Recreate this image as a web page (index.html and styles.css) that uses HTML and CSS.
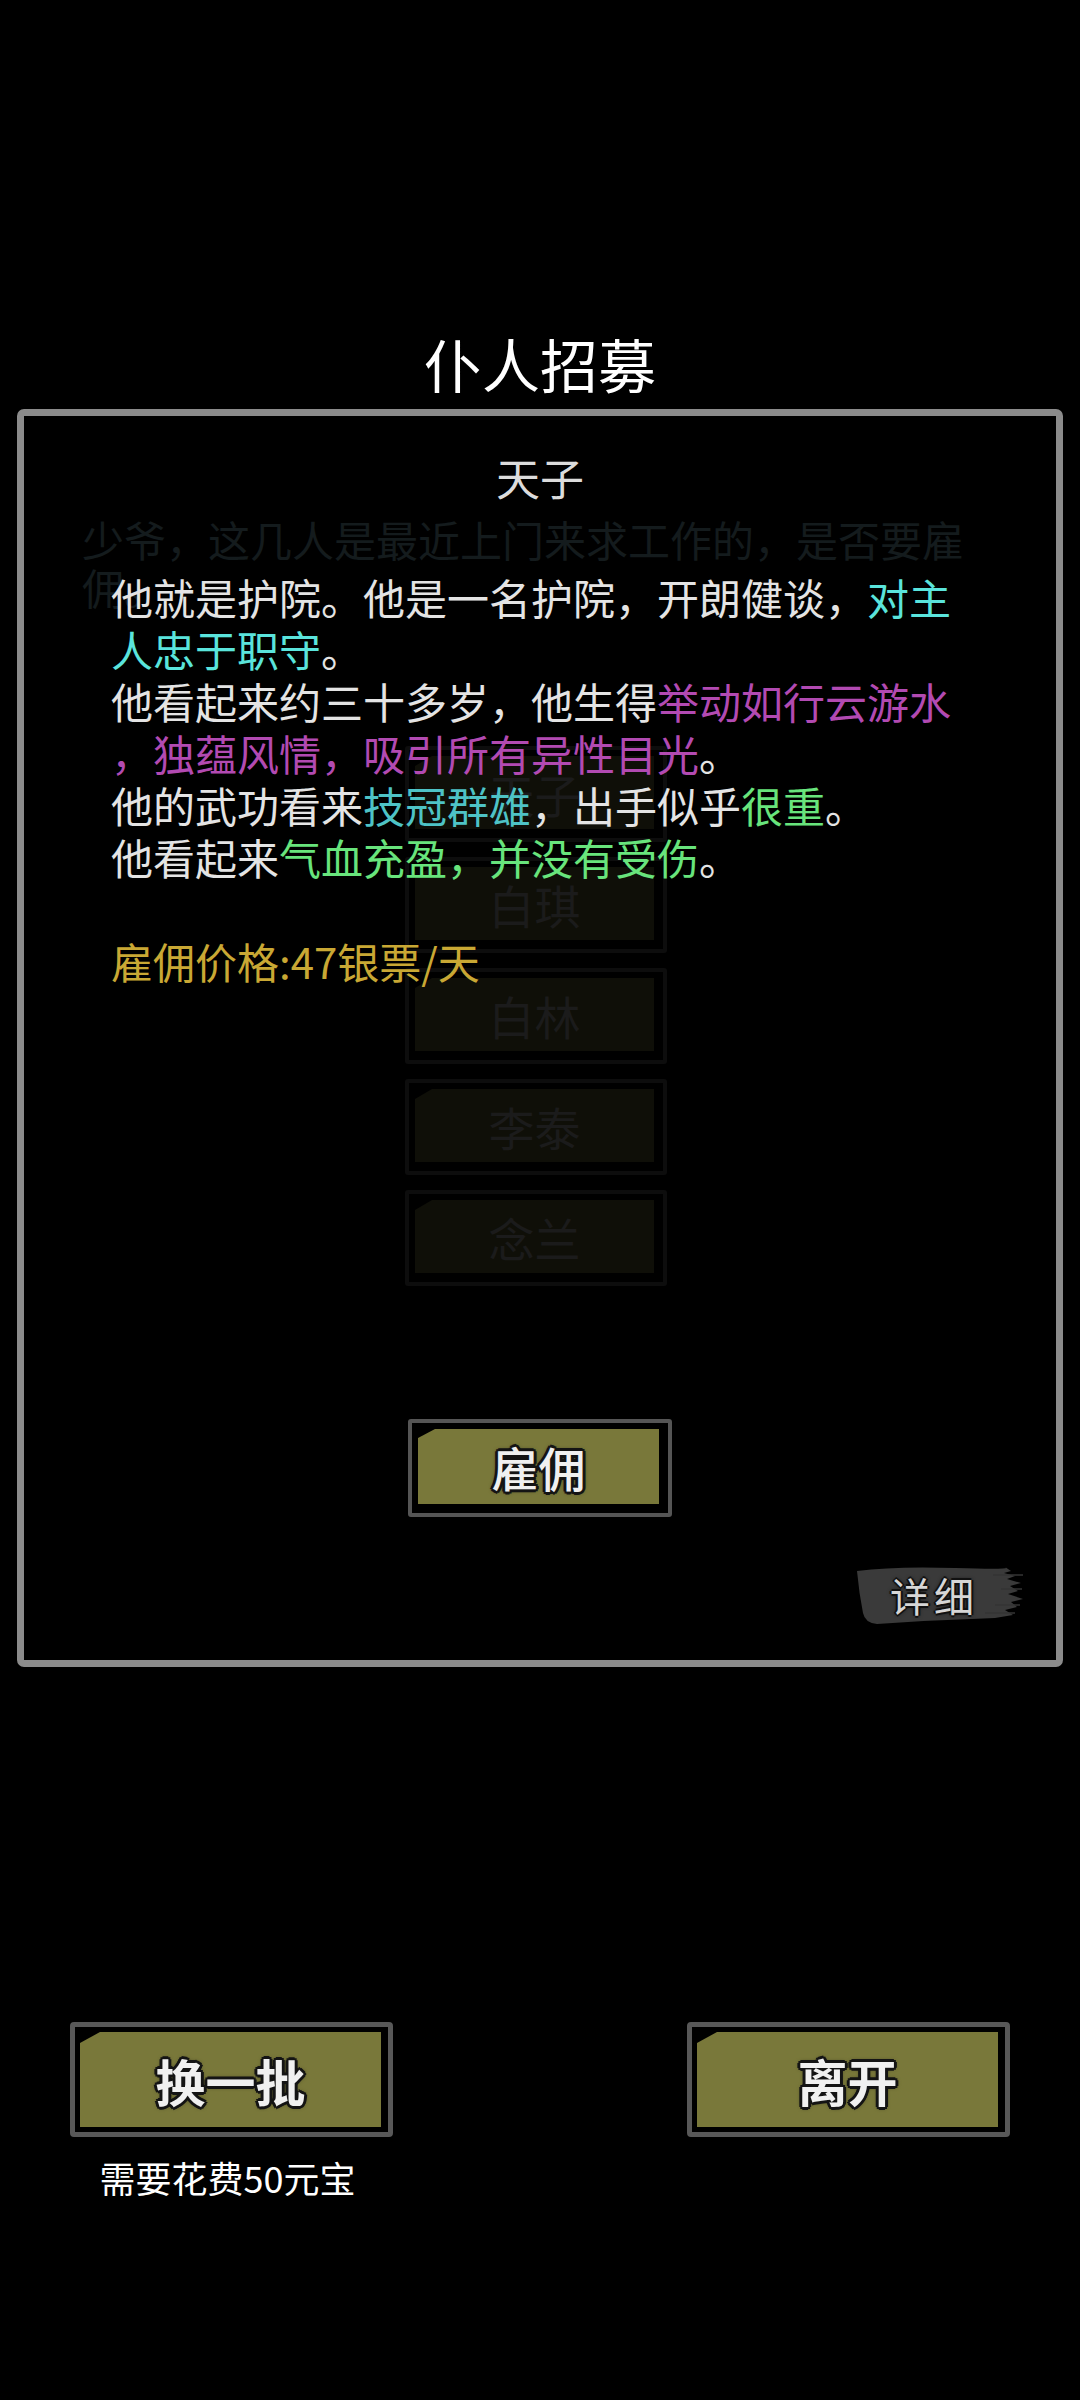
FILE: index.html
```html
<!DOCTYPE html>
<html lang="zh">

<head>
    <meta charset="UTF-8">
    <meta name="viewport" content="width=device-width, initial-scale=1.0">
    <title>仆人招募</title>
    <link rel="stylesheet" href="styles.css">
</head>

<body>
    <h1 class="title">仆人招募</h1>

    <div class="panel">
        <!-- dimmed dialog behind the popup -->
        <div class="backdrop">
            <p class="backdrop-text">少爷，这几人是最近上门来求工作的，是否要雇佣。</p>
            <ul class="backdrop-list">
                <li class="ghost-btn"><span>天子</span></li>
                <li class="ghost-btn"><span>白琪</span></li>
                <li class="ghost-btn"><span>白林</span></li>
                <li class="ghost-btn"><span>李泰</span></li>
                <li class="ghost-btn"><span>念兰</span></li>
            </ul>
        </div>

        <div class="panel-body">
            <div class="servant-name">天子</div>

            <div class="servant-desc">
                他就是护院。他是一名护院，开朗健谈，<span class="c-cyan">对主<br>人忠于职守</span>。<br>
                他看起来约三十多岁，他生得<span class="c-purple">举动如行云游水<br>，独蕴风情，吸引所有异性目光</span>。<br>
                他的武功看来<span class="c-teal">技冠群雄</span>，出手似乎<span class="c-green">很重</span>。<br>
                他看起来<span class="c-green">气血充盈，并没有受伤</span>。<br>
                <br>
                <span class="c-gold">雇佣价格:47银票/天</span>
            </div>

            <div class="btn btn-hire"><span class="btn-fill">雇佣</span></div>

            <div class="detail-row">
                <div class="detail-brush">
                    <svg class="brush" viewBox="0 0 168 64" width="168" height="64">
                        <path d="M2 8 Q40 3 100 5 T150 4 L156 8 L149 10 L160 13 L152 16 L166 20 L155 23 L163 28 L153 31 L168 36 L156 39 L162 44 L150 47 L158 52 L140 55 Q80 57 22 61 Q10 60 8 50 Q4 30 2 8 Z" fill="#3a3a3a" />
                        <path d="M138 12 H170 M146 26 H167 M140 42 H165 M130 50 H160" stroke="#343434" stroke-width="1.5" />
                    </svg>
                    <span class="detail-text">详细</span>
                </div>
            </div>
        </div>
    </div>

    <div class="actions">
        <div class="action">
            <div class="btn btn-big"><span class="btn-fill">换一批</span></div>
            <div class="cost">需要花费50元宝</div>
        </div>
        <div class="action">
            <div class="btn btn-big"><span class="btn-fill">离开</span></div>
        </div>
    </div>
</body>

</html>
```

FILE: styles.css
```css
* {
    margin: 0;
    padding: 0;
    box-sizing: border-box;
}

body {
    width: 1080px;
    min-height: 2400px;
    background-color: #000;
    color: #e4e4e4;
    font-family: "Noto Sans CJK SC", "Noto Sans", sans-serif;
    overflow: hidden;
}

.title {
    padding-top: 328px;
    font-size: 58px;
    line-height: 70px;
    font-weight: 400;
    text-align: center;
    color: #fff;
}

/* Popup panel */
.panel {
    position: relative;
    height: 1258px;
    margin: 11px 17px 0;
    border: 7px solid #8b8b8b;
    border-radius: 7px;
    background-color: #000;
}

.backdrop {
    position: absolute;
    inset: 0;
    padding-top: 99px;
}

.backdrop-text {
    width: 900px;
    margin-left: 58px;
    font-size: 42px;
    line-height: 48px;
    color: #141b1d;
}

.backdrop-list {
    list-style: none;
    margin-top: 135px;
    padding-left: 381px;
    display: flex;
    flex-direction: column;
    gap: 15px;
}

.ghost-btn {
    width: 262px;
    height: 96px;
    padding: 6px 9px 9px 6px;
    border: 4px solid #0d0d0d;
    border-radius: 3px;
}

.ghost-btn span {
    display: flex;
    align-items: center;
    justify-content: center;
    height: 100%;
    background-color: #0f0f08;
    clip-path: polygon(0 10px, 17px 0, 100% 0, 100% 100%, 0 100%);
    font-size: 46px;
    color: #1b1b1b;
}

.panel-body {
    position: relative;
    padding-top: 35px;
}

.servant-name {
    font-size: 44px;
    line-height: 52px;
    text-align: center;
    color: #dcdcdc;
}

.servant-desc {
    margin-top: 68px;
    padding-left: 87px;
    font-size: 42px;
    line-height: 52px;
    white-space: nowrap;
    color: #e4e4e4;
}

.c-cyan {
    color: #5ae4dc;
}

.c-purple {
    color: #b24ab2;
}

.c-teal {
    color: #4ec3c6;
}

.c-green {
    color: #68e47c;
}

.c-gold {
    color: #c9a834;
}

/* Olive game buttons */
.btn {
    border: 4px solid #555;
    border-radius: 3px;
    background-color: #000;
}

.btn-fill {
    display: flex;
    align-items: center;
    justify-content: center;
    height: 100%;
    background-color: #79783a;
    color: #f0f0f0;
    text-shadow: 3px 0 #141414, -3px 0 #141414, 0 3px #141414, 0 -3px #141414,
        2px 2px #141414, -2px -2px #141414, 2px -2px #141414, -2px 2px #141414, 0 0 5px #000;
}

.btn-hire {
    width: 264px;
    height: 98px;
    margin: 432px auto 0;
    padding: 6px 9px 9px 6px;
}

.btn-hire .btn-fill {
    clip-path: polygon(0 9px, 17px 0, 100% 0, 100% 100%, 0 100%);
    font-size: 47px;
    font-weight: 500;
}

.detail-row {
    display: flex;
    justify-content: flex-end;
    margin-top: 46px;
    padding-right: 33px;
}

.detail-brush {
    position: relative;
    width: 168px;
    height: 64px;
    display: flex;
    align-items: center;
    justify-content: center;
}

.brush {
    position: absolute;
    left: 0;
    top: 0;
}

.detail-text {
    position: relative;
    margin-right: 10px;
    font-size: 40px;
    letter-spacing: 4px;
    color: #d6d6d6;
    text-shadow: 2px 0 #111, -2px 0 #111, 0 2px #111, 0 -2px #111, 0 0 4px #000;
}

/* Bottom actions */
.actions {
    display: flex;
    justify-content: space-between;
    margin-top: 355px;
    padding: 0 70px;
}

.action {
    display: flex;
    flex-direction: column;
    align-items: center;
}

.btn-big {
    width: 323px;
    height: 115px;
    padding: 5px 7px 5px 5px;
    border-width: 5px;
    border-color: #585858;
    border-radius: 4px;
}

.btn-big .btn-fill {
    clip-path: polygon(0 11px, 20px 0, 100% 0, 100% 100%, 0 100%);
    font-size: 50px;
    font-weight: 700;
}

.cost {
    margin-top: 19px;
    margin-right: 8px;
    font-size: 36px;
    line-height: 42px;
    color: #fff;
}
```
